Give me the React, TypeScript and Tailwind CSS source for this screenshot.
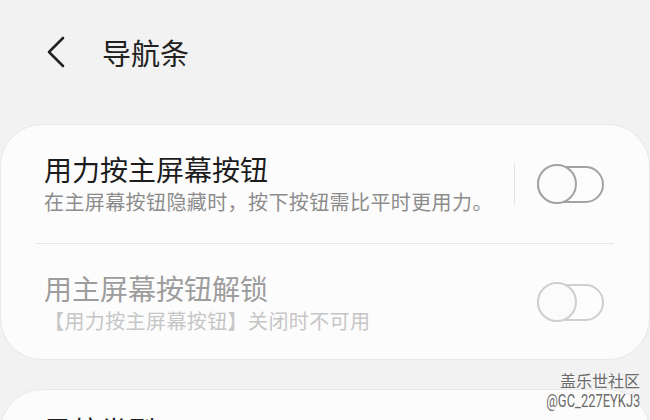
import React from "react";

const font = { fontFamily: '"Noto Sans CJK SC", "Noto Sans", sans-serif' };

function Toggle({ disabled }: { disabled?: boolean }) {
  const c = disabled ? "border-[#cfcfcf]" : "border-[#a3a3a3]";
  return (
    <div className="relative w-[67px] h-[40px] shrink-0">
      <div className={`absolute left-[0px] top-[2px] w-[67px] h-[37px] rounded-full border-2 ${c} bg-[#fdfdfd]`} />
      <div className={`absolute left-0 top-0 w-[40px] h-[40px] rounded-full border-2 ${c} bg-[#fbfbfb]`} />
    </div>
  );
}

export default function App() {
  return (
    <div className="relative w-[650px] h-[420px] overflow-hidden bg-[#f2f2f2]" style={font}>
      <div className="h-[104px] flex items-center pl-[47px]">
        <svg width="20" height="32" viewBox="0 0 20 32" className="shrink-0">
          <polyline points="16,2 2,16 16,30" fill="none" stroke="#222" strokeWidth="2.6" strokeLinecap="round" strokeLinejoin="round" />
        </svg>
        <div className="ml-[35px] text-[29px] leading-[36px] text-[#222]">导航条</div>
      </div>

      <div className="mt-[20px] rounded-[42px] bg-[#fcfcfc] border border-[#e8e8e8]">
        <div className="h-[118px] flex items-center pl-[43px] pr-[45px]">
          <div className="flex-1 pt-[0px]">
            <div className="text-[28px] leading-[34px] text-[#1c1c1c]">用力按主屏幕按钮</div>
            <div className="mt-[2px] text-[20px] leading-[28px] tracking-[0.4px] text-[#8c8c8c]">在主屏幕按钮隐藏时，按下按钮需比平时更用力。</div>
          </div>
          <div className="w-px h-[42px] bg-[#e2e2e2] mr-[22px]" />
          <Toggle />
        </div>
        <div className="h-px mx-[35px] bg-[#e6e6e6]" />
        <div className="h-[115px] flex items-center pl-[43px] pr-[45px]">
          <div className="flex-1 pt-[2px]">
            <div className="text-[28px] leading-[34px] text-[#9d9d9d]">用主屏幕按钮解锁</div>
            <div className="mt-[2px] text-[20px] leading-[28px] tracking-[0.4px] text-[#c6c6c6]">【用力按主屏幕按钮】关闭时不可用</div>
          </div>
          <Toggle disabled />
        </div>
      </div>

      <div className="mt-[29px] h-[120px] rounded-[42px] bg-[#fcfcfc] border border-[#e8e8e8] pl-[43px] pt-[23px]">
        <div className="text-[28px] leading-[34px] text-[#1c1c1c]">导航类型</div>
      </div>

      <div className="absolute right-[10px] top-[369px] flex flex-col items-end text-[#6a6a6a] [text-shadow:0_0_2px_#ffffff,0_0_1px_#ffffff]">
        <div className="text-[16px] leading-[22px]">盖乐世社区</div>
        <div className="text-[19px] leading-[20px] scale-x-[0.68] origin-right" style={{ fontFamily: "Roboto, sans-serif" }}>@GC_227EYKJ3</div>
      </div>
    </div>
  );
}
